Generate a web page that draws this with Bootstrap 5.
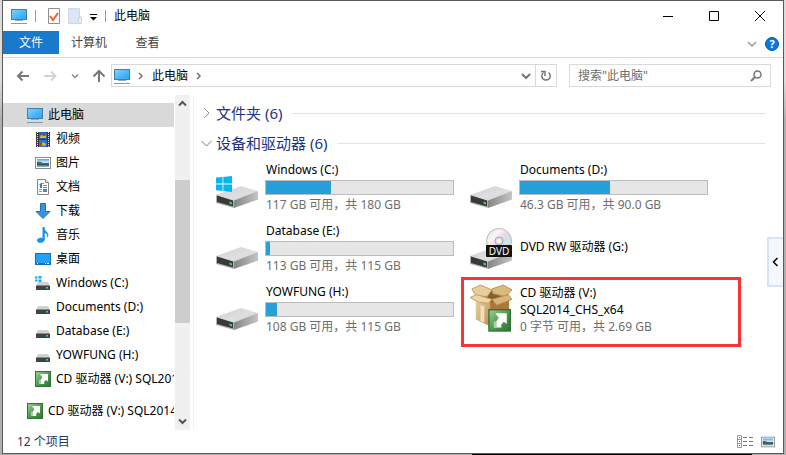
<!DOCTYPE html>
<html lang="zh-CN">
<head>
<meta charset="utf-8">
<meta name="viewport" content="width=device-width, initial-scale=1">
<title>此电脑</title>
<link href="https://cdn.jsdelivr.net/npm/bootstrap@5.3.0/dist/css/bootstrap.min.css" rel="stylesheet">
<style>
body{font:12px/16px "Noto Sans","Noto Sans CJK SC",sans-serif;color:#000;background:linear-gradient(#dcdcdc 80px,#b0b0b0 120px)}
button,input{font:inherit;color:inherit}
button{border:0;background:none;padding:0;display:flex;align-items:center;justify-content:center}
svg{display:block;flex:none}
a{color:inherit;text-decoration:none}
.desk{height:100vh;min-height:300px;padding:0 2px 1px}
.win{background:#fff;border:1px solid #595959}
.titlebar{height:30px;padding-left:8px}
.vline{width:1px;height:12px;background:#999}
.cap{width:46px;height:30px}
.ribbon{height:27px;border-bottom:1px solid #d9dadb}
.tabx{height:23px;width:60px;color:#444}
.tabx.file{width:56px;background:#1979ca;color:#fff}
.tabx.view{width:57px}
.addr-row{height:37px;padding:6px 12px 8px 8px}
.nav-b{width:24px;height:23px}
.addr,.search{border:1px solid #d9d9d9;height:23px}
.addr{padding-left:2px}
.crumbs{gap:8px}
.search{width:202px}
.search input{border:0;outline:0;padding:0 0 0 8px;min-width:0;background:none}
.search input::placeholder{color:#6d6d6d;opacity:1}
.refresh{width:21px;border-left:1px solid #d9d9d9}
.side{width:191px;border-right:1px solid #f0f0f0}
.tree{padding-top:8px;margin-right:1px}
.tree a{display:flex;align-items:center;height:24px;padding-left:32px;gap:5px;white-space:nowrap;overflow:hidden}
.tree a.root{padding-left:24px}
.tree a.on{background:#d9d9d9}
.tree a.gap{margin-top:8px}
.sbar{width:15px;background:#f0f0f0;margin-right:3px}
.sbar button{height:17px;width:15px}
.thumb{flex:0 0 143px;background:#cdcdcd}
.sp-a{flex:68 0 0}.sp-b{flex:90 0 0}
.main{padding:3px 9px 0 7px}
.group{height:30px;font-size:15px;line-height:30px;color:#1e3287;gap:4px}
.group svg{width:11px}
.group::after{content:"";flex:1;height:1px;background:#e2e2e2;margin:0 9px 0 6px}
.drives{grid-template-columns:254px 254px;grid-auto-rows:61px;padding:4px 0 0 15px}
.drive{gap:7px;position:relative}
.drive svg{margin-top:4px}
.cap-info{width:189px}
.cap-info div:not(.progress,.progress-bar){padding-left:1px}
.sub{color:#6d6d6d}
.progress{--bs-progress-height:15px;--bs-progress-bg:#e6e6e6;--bs-progress-bar-bg:#26a0da;border:1px solid #bcbcbc;border-radius:0;margin:2px 0}
.marked{line-height:17px}
.marked::after{content:"";position:absolute;left:-9px;top:-7px;width:280px;height:70px;border:3px solid #fa3434}
.side-tab{position:absolute;right:0;top:142px;width:16px;height:50px;border:2px solid #d6e4f5;border-right:0;background:#f4f8fd}
.status{height:23px;color:#1e395b;padding:0 8px 0 14px}
.shadow-line{position:absolute;left:60%;right:34px;bottom:0;height:1px;background:#000}
</style>
<script src="https://cdn.jsdelivr.net/npm/bootstrap@5.3.0/dist/js/bootstrap.bundle.min.js"></script>
</head>
<body>
<svg width="0" height="0" class="position-absolute" aria-hidden="true">
<defs>
<linearGradient id="blue" x1="0" y1="0" x2="1" y2="1"><stop stop-color="#8bd0ff"/><stop offset=".5" stop-color="#4fb9fb"/><stop offset="1" stop-color="#27a2f5"/></linearGradient>
<linearGradient id="silver" x1="0" y1="0" x2="1" y2="1"><stop stop-color="#cfd0d2"/><stop offset=".6" stop-color="#dedfe1"/><stop offset="1" stop-color="#c5c6c9"/></linearGradient>
<linearGradient id="sideg" x1="0" y1="0" x2="1" y2="0"><stop stop-color="#858585"/><stop offset="1" stop-color="#c3c4c7"/></linearGradient>
<linearGradient id="green" x1="0" y1="0" x2="1" y2="1"><stop stop-color="#9fd09a"/><stop offset=".5" stop-color="#4f9c4d"/><stop offset="1" stop-color="#2f7230"/></linearGradient>
<linearGradient id="boxg" x1="0" y1="0" x2="1" y2="1"><stop stop-color="#ecd5a6"/><stop offset="1" stop-color="#bd9252"/></linearGradient>
<linearGradient id="disc" x1="0" y1="0" x2="1" y2="1"><stop stop-color="#d5dada"/><stop offset=".3" stop-color="#f7f7f7"/><stop offset=".45" stop-color="#f3d9ef"/><stop offset=".55" stop-color="#dadddd"/><stop offset=".75" stop-color="#c6eae4"/><stop offset="1" stop-color="#c6c8c8"/></linearGradient>
<linearGradient id="sky" x1="0" y1="0" x2="0" y2="1"><stop stop-color="#5b9df0"/><stop offset=".45" stop-color="#d9ebf8"/><stop offset=".5" stop-color="#466f5c"/><stop offset=".7" stop-color="#2d5a63"/><stop offset="1" stop-color="#9fc1cf"/></linearGradient>
<symbol id="pc" viewBox="0 0 16 16"><rect x=".5" y="1.500" width="15" height="10" fill="url(#blue)" stroke="#437fa8"/><path d="M4 13h8v-1H4z" fill="#8aa9bd"/><path d="M0 15.500h16" stroke="#7f9bb4"/></symbol>
<symbol id="video" viewBox="0 0 16 16"><rect x="1" y="1" width="14" height="15" fill="#3a3a3a"/><rect x="4" y="1" width="8" height="7" fill="#3163ae"/><rect x="4" y="9" width="8" height="7" fill="#3472c9"/><path d="M5 7c0-3 2-4 3-2 1-3 3-2 3 1v1zM6 14l2-3 3 2-1 2z" fill="#e5b520"/><path d="M8 3h2v2H8zM5 12h2v2H5z" fill="#b83f25"/><path d="M2.500 1v15M13.500 1v15" stroke="#ddd" stroke-dasharray="1 1"/></symbol>
<symbol id="photo" viewBox="0 0 16 16"><rect x=".5" y="2.500" width="15" height="11" fill="#fff" stroke="#8d8d8d"/><rect x="2" y="4" width="12" height="8" fill="url(#sky)"/><path d="M2 7c3-1 5 1 9 2H2z" fill="#3d6a50"/></symbol>
<symbol id="doc" viewBox="0 0 16 16"><path d="M2.500.5h8l3 3v12h-11z" fill="#fff" stroke="#858585"/><path d="M10.500.5v3h3" fill="#eee" stroke="#858585"/><path d="M7 4.500h2M8 6.500h4M8 8.500h4" stroke="#4a9ed8"/><path d="M4 6l2-2h1v5H5V6z" fill="#2c84c5"/><path d="M4 10.500h3M4 12.500h3" stroke="#8d8d8d"/><path d="M8 10h4v3H8z" fill="#4d88b8"/></symbol>
<symbol id="down" viewBox="0 0 16 16"><path d="M5.500.5h5v8h4.500L8 15.500 1 8.500h4.500z" fill="#3493e2" stroke="#2272b8"/></symbol>
<symbol id="music" viewBox="0 0 16 16"><path d="M7.500 0v11C5 10.300 2 11.300 2 13.500c0 3.300 7.300 3 7.800-.8V6c2 .5 3 2 2 5 3-3 1.200-5-.5-6.500C10.100 3.300 9.600 2 9.600 0z" fill="#1595ea"/></symbol>
<symbol id="desktop" viewBox="0 0 16 16"><rect x=".5" y="2.500" width="15" height="11" fill="#22a1f6" stroke="#1770ad"/><path d="M1 12.500h14" stroke="#1770ad"/><path d="M2 12.500h1M10 12.500h1M12 12.500h2" stroke="#fff"/></symbol>
<symbol id="disk" viewBox="0 0 16 16"><path d="M3 7h10l2 4H1z" fill="#cfd1d3"/><rect x="1" y="10.500" width="14" height="4.500" rx=".6" fill="#3f4345"/><rect x="11" y="12" width="2" height="1.500" fill="#3fe446"/></symbol>
<symbol id="flag" viewBox="0 0 16 16"><path d="M0 1.600L6.500 1v6.500H0zM7.300.9L16 0v7.500H7.300zM0 8.500h6.500V15L0 14.300zM7.300 8.500H16V16l-8.700-.9z" fill="#00b9f2"/></symbol>
<symbol id="diskwin" viewBox="0 0 16 16"><use href="#disk"/><path d="M0 1.500h2.500V3.500H0zM3.500 1H6.500v2.500H3.500zM0 4.500h2.500v2H0zM3.500 4.500h3V7h-3z" fill="#00b4f0"/></symbol>
<symbol id="go" viewBox="0 0 16 16"><rect x=".5" y=".5" width="15" height="15" fill="url(#green)" stroke="#35703a"/><path d="M5 3h8v7.500L11 9 9.200 10.800V13H4V9h1.500L7.400 6.200z" fill="#fff"/><path d="M4 9h2v4H4z" fill="#a9cfa7"/></symbol>
<symbol id="hdd" viewBox="0 0 42 42"><path d="M0 29L25 20 42 25 18 34.500z" fill="url(#silver)"/><path d="M18 34.500L42 25v8.500L18 42z" fill="url(#sideg)"/><path d="M0 29l18 5.500V42L0 37z" fill="#b2b3b4"/><path d="M1 29.500l16 5v6L1 36z" fill="#373a3b"/><path d="M13.500 35.500l2.500 1v2l-2.500-.9z" fill="#3ee545"/></symbol>
<symbol id="dvd" viewBox="0 0 42 42"><use href="#hdd"/><circle cx="29" cy="14" r="12.500" fill="url(#disc)" stroke="#b7bbbb"/><circle cx="29" cy="14" r="4" fill="#ddd" stroke="#aaa"/><circle cx="29" cy="14" r="1.800" fill="#fff"/><rect x="16" y="18" width="26" height="12" rx="1" fill="#111"/><text x="29" y="27.500" text-anchor="middle" font-family="Noto Sans,sans-serif" font-size="10" fill="#fff">DVD</text></symbol>
<symbol id="box" viewBox="1 0 44 50"><path d="M7 12l15 6v26L7 37z" fill="url(#boxg)"/><path d="M22 18l20-6v22L22 44z" fill="#a9793a"/><path d="M7 11l17-4 18 4-18 8z" fill="#83602f"/><path d="M3 5l9-4 12 5-5 7-12-1z" fill="#e7ce9b" stroke="#c39d5f"/><path d="M24 5l12-4 9 5-7 7-13-3z" fill="#d9b97e" stroke="#b98e4e"/><path d="M1 14l7-3 16 5-4 4-10-1z" fill="#ecd6a9" stroke="#c39d5f"/><path d="M24 16l17-5 4 5-16 6z" fill="#d8b67a" stroke="#b98e4e"/><path d="M12 22v17l4 1V23z" fill="#f1e0bd"/><use href="#go" x="20" y="26" width="24" height="24"/></symbol>
</defs>
</svg>

<div class="desk d-flex position-relative">
<div class="win flex-grow-1 d-flex flex-column overflow-hidden">
  <header class="titlebar d-flex align-items-center">
    <svg width="16" height="16"><use href="#pc"/></svg>
    <span class="vline ms-2 me-2"></span>
    <button class="ms-1" aria-label="属性"><svg width="12" height="16"><path d="M.5.500h11v15H.500z" fill="#fff" stroke="#8f8f8f"/><path d="M2 8l3 4 5-7" fill="none" stroke="#e8602c" stroke-width="2"/></svg></button>
    <button class="ms-2" aria-label="新建文件夹"><svg width="14" height="16"><path d="M.5.500h11v15H.500z" fill="#dbe5f5" stroke="#cddaed"/><path d="M12 8l1.500 2v5.500h-3V11z" fill="#e8effa" stroke="#c6d5ea"/></svg></button>
    <button class="ms-2" aria-label="自定义快速访问工具栏"><svg width="7" height="16"><path d="M0 6.500h7" stroke="#000"/><path d="M0 9h7l-3.500 3.500z"/></svg></button>
    <span class="vline ms-2"></span>
    <span class="ms-2 ps-0 me-auto">此电脑</span>
    <button class="cap" aria-label="最小化"><svg width="10" height="10"><path d="M0 5.500h10" stroke="#000"/></svg></button>
    <button class="cap" aria-label="最大化"><svg width="10" height="10"><path d="M.5.500h9v9h-9z" fill="none" stroke="#000"/></svg></button>
    <button class="cap" aria-label="关闭"><svg width="10" height="10"><path d="M0 0l10 10M10 0L0 10" stroke="#000"/></svg></button>
  </header>
  <nav class="ribbon d-flex">
    <button class="tabx file">文件</button>
    <button class="tabx">计算机</button>
    <button class="tabx view">查看</button>
    <button class="ms-auto me-2" aria-label="展开功能区"><svg width="10" height="10"><path d="M1 3l4 4 4-4" fill="none" stroke="#999" stroke-width="1.500"/></svg></button>
    <button class="me-1" aria-label="帮助"><svg width="14" height="14"><circle cx="7" cy="7" r="6.500" fill="#0a78d8" stroke="#075ea9"/><text x="7" y="11" text-anchor="middle" font-size="11" font-weight="700" fill="#fff">?</text></svg></button>
  </nav>
  <div class="addr-row d-flex align-items-center">
    <button class="nav-b" aria-label="后退"><svg width="14" height="12"><path d="M13 6H2M6.500 1.500L2 6l4.500 4.500" fill="none" stroke="#777" stroke-width="2"/></svg></button>
    <button class="nav-b ms-1" aria-label="前进"><svg width="14" height="12"><path d="M0 6h11M7 1.500L11.500 6 7 10.500" fill="none" stroke="#d4d4d4" stroke-width="2"/></svg></button>
    <button class="nav-b" aria-label="最近浏览"><svg width="8" height="8"><path d="M1 2.500l3 3 3-3" fill="none" stroke="#8a8a8a" stroke-width="1.500"/></svg></button>
    <button class="nav-b" aria-label="向上"><svg width="14" height="14"><path d="M7 13V2M1.500 7.500L7 2l5.500 5.500" fill="none" stroke="#777" stroke-width="2"/></svg></button>
    <div class="addr flex-grow-1 d-flex align-items-center me-2">
      <div class="crumbs d-flex align-items-center flex-grow-1">
        <svg width="16" height="16"><use href="#pc"/></svg>
        <svg width="6" height="8"><path d="M1 1l3 3-3 3" fill="none" stroke="#777" stroke-width="1.500"/></svg>
        <a href="#">此电脑</a>
        <svg width="6" height="8"><path d="M1 1l3 3-3 3" fill="none" stroke="#777" stroke-width="1.500"/></svg>
      </div>
      <button class="me-1" aria-label="以前的位置"><svg width="10" height="8"><path d="M1 2l4 4 4-4" fill="none" stroke="#777" stroke-width="2"/></svg></button>
      <button class="refresh h-100" aria-label="刷新"><svg width="12" height="12"><path d="M8.500 2.500A4.200 4.200 0 1 1 3.500 2.500" fill="none" stroke="#777" stroke-width="1.500"/><path d="M1 1.500h4v4.500" fill="none" stroke="#777" stroke-width="1.500"/></svg></button>
    </div>
    <div class="search d-flex align-items-center ms-1 pe-2">
      <input class="flex-grow-1" type="text" aria-label="搜索" placeholder="搜索&quot;此电脑&quot;">
      <button aria-label="开始搜索"><svg width="12" height="12"><circle cx="7.500" cy="4.500" r="3.500" fill="none" stroke="#777" stroke-width="1.500"/><path d="M5 7L1 11" stroke="#777" stroke-width="2"/></svg></button>
    </div>
  </div>

  <div class="d-flex flex-grow-1 overflow-hidden position-relative">
    <aside class="side d-flex flex-shrink-0">
      <nav class="tree flex-grow-1 overflow-hidden">
        <a href="#" class="root on"><svg width="16" height="16"><use href="#pc"/></svg>此电脑</a>
        <a href="#"><svg width="16" height="16"><use href="#video"/></svg>视频</a>
        <a href="#"><svg width="16" height="16"><use href="#photo"/></svg>图片</a>
        <a href="#"><svg width="16" height="16"><use href="#doc"/></svg>文档</a>
        <a href="#"><svg width="16" height="16"><use href="#down"/></svg>下载</a>
        <a href="#"><svg width="16" height="16"><use href="#music"/></svg>音乐</a>
        <a href="#"><svg width="16" height="16"><use href="#desktop"/></svg>桌面</a>
        <a href="#"><svg width="16" height="16"><use href="#diskwin"/></svg>Windows (C:)</a>
        <a href="#"><svg width="16" height="16"><use href="#disk"/></svg>Documents (D:)</a>
        <a href="#"><svg width="16" height="16"><use href="#disk"/></svg>Database (E:)</a>
        <a href="#"><svg width="16" height="16"><use href="#disk"/></svg>YOWFUNG (H:)</a>
        <a href="#"><svg width="16" height="16"><use href="#go"/></svg>CD 驱动器 (V:) SQL2014_CHS_x64</a>
        <a href="#" class="root gap"><svg width="16" height="16"><use href="#go"/></svg>CD 驱动器 (V:) SQL2014_CHS_x64</a>
      </nav>
      <div class="sbar d-flex flex-column flex-shrink-0">
        <button aria-label="向上滚动"><svg width="9" height="7"><path d="M1 5.500L4.500 2 8 5.500" fill="none" stroke="#555" stroke-width="2"/></svg></button>
        <div class="sp-a"></div><div class="thumb"></div><div class="sp-b"></div>
        <button aria-label="向下滚动"><svg width="9" height="7"><path d="M1 1.500L4.500 5 8 1.500" fill="none" stroke="#555" stroke-width="2"/></svg></button>
      </div>
    </aside>
    <main class="main flex-grow-1">
      <div class="group d-flex align-items-center"><svg width="11" height="12"><path d="M3 1l5 5-5 5" fill="none" stroke="#999"/></svg>文件夹 (6)</div>
      <div class="group d-flex align-items-center"><svg width="11" height="9"><path d="M.5 2l5 5 5-5" fill="none" stroke="#777"/></svg>设备和驱动器 (6)</div>
      <div class="drives d-grid">
        <div class="drive d-flex"><svg width="42" height="42"><use href="#hdd"/><use href="#flag" y="10" width="16" height="16"/></svg>
          <div class="cap-info"><div>Windows (C:)</div><div class="progress"><div class="progress-bar" style="width:35%"></div></div><div class="sub">117 GB 可用，共 180 GB</div></div></div>
        <div class="drive d-flex"><svg width="42" height="42"><use href="#hdd"/></svg>
          <div class="cap-info"><div>Documents (D:)</div><div class="progress"><div class="progress-bar" style="width:48%"></div></div><div class="sub">46.3 GB 可用，共 90.0 GB</div></div></div>
        <div class="drive d-flex"><svg width="42" height="42"><use href="#hdd"/></svg>
          <div class="cap-info"><div>Database (E:)</div><div class="progress"><div class="progress-bar" style="width:2%"></div></div><div class="sub">113 GB 可用，共 115 GB</div></div></div>
        <div class="drive d-flex"><svg width="42" height="42"><use href="#dvd"/></svg>
          <div class="cap-info pt-3"><div>DVD RW 驱动器 (G:)</div></div></div>
        <div class="drive d-flex"><svg width="42" height="42"><use href="#hdd"/></svg>
          <div class="cap-info"><div>YOWFUNG (H:)</div><div class="progress"><div class="progress-bar" style="width:6%"></div></div><div class="sub">108 GB 可用，共 115 GB</div></div></div>
        <div class="drive d-flex marked"><svg class="mt-0" width="42" height="48"><use href="#box"/></svg>
          <div class="cap-info"><div>CD 驱动器 (V:)</div><div>SQL2014_CHS_x64</div><div class="sub">0 字节 可用，共 2.69 GB</div></div></div>
      </div>
    </main>
    <button class="side-tab" aria-label="展开侧栏"><svg width="8" height="10"><path d="M5.500 1L1.500 5l4 4" fill="none" stroke="#000" stroke-width="1.500"/></svg></button>
  </div>
  <footer class="status d-flex align-items-center">
    <span class="me-auto">12 个项目</span>
    <button class="me-2" aria-label="详细信息"><svg width="16" height="13"><path d="M.5.500h4v12h-4zM.5 4.500h4M.5 8.500h4" fill="#fff" stroke="#999"/><path d="M2 2.500h1" stroke="#2a7a48"/><path d="M2 6.500h1" stroke="#2876d8"/><path d="M2 10.500h1" stroke="#e22"/><path d="M6 2.500h4M12 2.500h4M6 6.500h4M12 6.500h4M6 10.500h4M12 10.500h4" stroke="#777"/></svg></button>
    <button aria-label="大图标"><svg width="14" height="14"><use href="#photo"/></svg></button>
  </footer>
</div>
<div class="shadow-line"></div>
</div>
</body>
</html>
